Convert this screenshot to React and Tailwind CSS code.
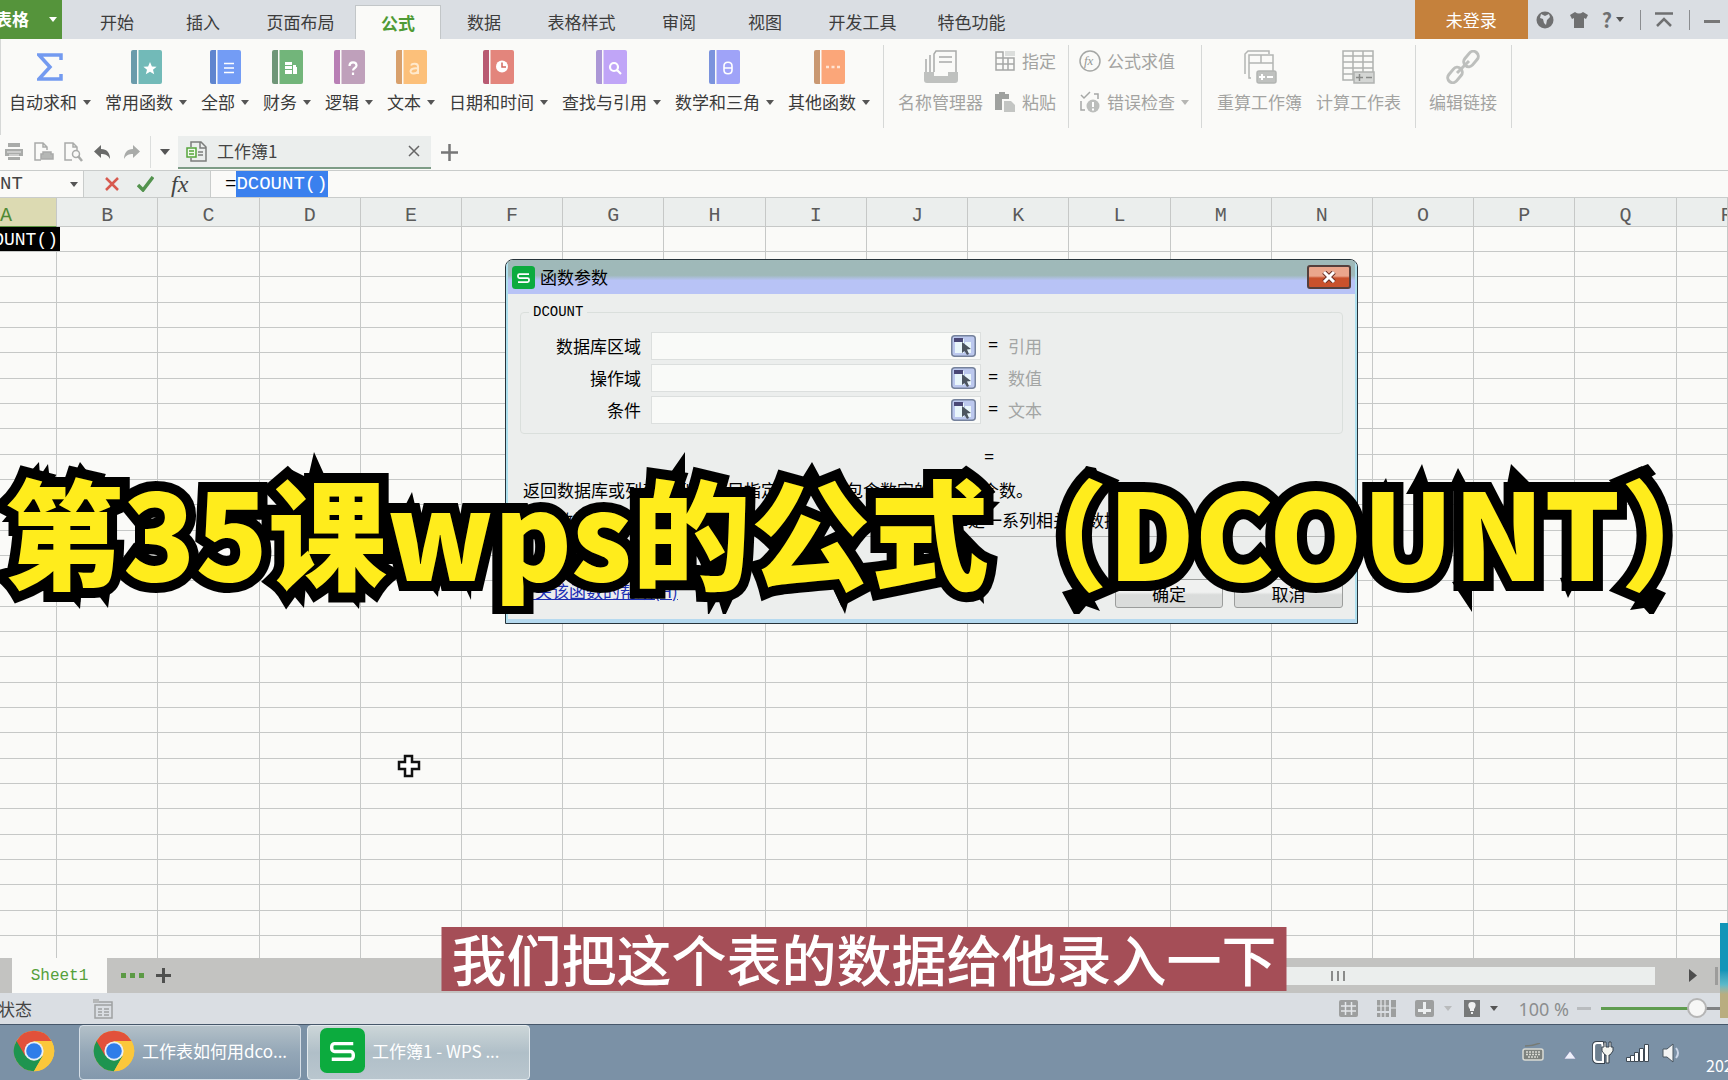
import { useEffect, useRef } from 'react';

const tabs = [
    { name: '开始', wide: false },
    { name: '插入', wide: false },
    { name: '页面布局', wide: true },
    { name: '公式', wide: false, active: true },
    { name: '数据', wide: false },
    { name: '表格样式', wide: true },
    { name: '审阅', wide: false },
    { name: '视图', wide: false },
    { name: '开发工具', wide: true },
    { name: '特色功能', wide: true },
];

const books = [
    { name: '常用函数', spine: '#6a9bab', cover: '#72bab8', mark: 'star' },
    { name: '全部', spine: '#5f85cf', cover: '#739cf5', mark: 'lines' },
    { name: '财务', spine: '#6f9678', cover: '#72b57a', mark: 'money' },
    { name: '逻辑', spine: '#b87fb5', cover: '#bfa0bb', mark: 'question' },
    { name: '文本', spine: '#d8a06c', cover: '#fcc07a', mark: 'letter' },
    { name: '日期和时间', spine: '#b85a72', cover: '#e3857c', mark: 'clock' },
    { name: '查找与引用', spine: '#ab97d6', cover: '#c0a5f7', mark: 'search' },
    { name: '数学和三角', spine: '#7b93dd', cover: '#9fa3f8', mark: 'theta' },
    { name: '其他函数', spine: '#c99872', cover: '#fba679', mark: 'dots' },
];

const columns = 'ABCDEFGHIJKLMNOPQR'.split('');
const rows = Array.from({ length: 29 }, (_, i) => i + 1);

const fields = [
    { id: 'database', label: '数据库区域', type: '引用' },
    { id: 'field', label: '操作域', type: '数值' },
    { id: 'criteria', label: '条件', type: '文本' },
];

const Caret = ({ className = 'text-[#555]' }) => (
    <svg width="8" height="5" viewBox="0 0 8 5" className={className} fill="currentColor">
        <path d="M0 0h8L4 5z" />
    </svg>
);

const marks = {
    star: <path d="M19 12l1.900 4.400 4.700.3-3.600 3 1.200 4.600-4.200-2.500-4.200 2.500 1.200-4.600-3.600-3 4.700-.3z" fill="#fff" />,
    lines: <path d="M14 13.500h10M14 18h10M14 22.500h10" stroke="#fff" strokeWidth="1.600" />,
    money: (
        <g fill="#fff">
            <path d="M13 12h7v3h-7zM13 16h7v3h-7zM13 20h7v4h-7z" />
            <path d="M21 15h3v2h1v7h-4zM22 18l3 2-3 2z" />
        </g>
    ),
    question: <path d="M15.500 16c0-5 7-4.500 7-.5 0 2.500-3.500 2.500-3.500 5M19 22.500v2.500" stroke="#fff" strokeWidth="2.200" fill="none" />,
    letter: <path d="M15 15.500c1-2.500 7-2.500 7 1v7.500M22 18.500c-9-1-9 5-4.500 5 2 0 4-1 4.500-2.500" stroke="#ffe9cc" strokeWidth="2" fill="none" />,
    clock: (
        <g>
            <circle cx="19" cy="16.500" r="6" fill="#fff" />
            <path d="M19 12.500v4.500h4" stroke="#d3685f" strokeWidth="1.500" fill="none" />
        </g>
    ),
    search: <path d="M22 17a4 4 0 1 1-8 0 4 4 0 0 1 8 0zM21 20l4 4" stroke="#fff" strokeWidth="2.200" fill="none" />,
    theta: <path d="M15 16c0-5 8-5 8 0v4c0 5-8 5-8 0zM14.500 18h9" stroke="#fff" strokeWidth="1.600" fill="none" />,
    dots: <path d="M12 17h3M17.500 17h3M23 17h3" stroke="#ffe3d2" strokeWidth="2.600" />,
};

const BookIcon = ({ spine, cover, mark }) => (
    <svg width="31" height="34" viewBox="0 0 31 34">
        <path d="M2 0h4v34H2a2 2 0 0 1-2-2V2a2 2 0 0 1 2-2z" fill={spine} />
        <path d="M7.500 0H29a2 2 0 0 1 2 2v30a2 2 0 0 1-2 2H7.500z" fill={cover} />
        {marks[mark]}
    </svg>
);

const BigButton = ({ icon, label, caret, disabled }) => (
    <button className={`flex flex-col items-center px-[7px] pt-[11px] ${disabled ? 'text-[#a3a3a1]' : 'text-[#3a3a3a]'}`}>
        <span className="flex h-[34px] items-center">{icon}</span>
        <span className="mt-[6px] flex items-center gap-[6px] whitespace-nowrap leading-6">
            {label}
            {caret && <Caret />}
        </span>
    </button>
);

const SmallButton = ({ icon, label, caret }) => (
    <button className="flex h-6 items-center gap-[6px] whitespace-nowrap text-[#a3a3a1]">
        <span className="flex w-[22px] justify-center">{icon}</span>
        {label}
        {caret && <Caret className="text-[#b5b5b3]" />}
    </button>
);

const Separator = () => <div className="mt-[6px] h-[83px] w-px shrink-0 bg-[#d6d8d7]" />;

const ChromeIcon = () => (
    <svg width="44" height="44" viewBox="0 0 48 48" className="shrink-0">
        <circle cx="24" cy="24" r="22" fill="#fbc73b" />
        <path d="M24 24L4.900 13A22 22 0 0 0 24 46l9.500-16.500z" fill="#1e9450" />
        <path d="M4.900 13a22 22 0 0 1 38.200 0H24L14.500 29.500z" fill="#e2513a" />
        <path d="M43.100 13H24l9.500 16.500L24 46a22 22 0 0 0 19.100-33z" fill="#fbc73b" />
        <circle cx="24" cy="24" r="10.500" fill="#e9eef5" />
        <circle cx="24" cy="24" r="8.500" fill="#2f7de9" />
    </svg>
);

const WpsIcon = ({ size }) => (
    <svg width={size} height={size} viewBox="0 0 46 46" className="shrink-0">
        <rect width="46" height="46" rx="7" fill="#0cab3e" />
        <path d="M34 16H15a3 3 0 0 0-3 3v2a3 3 0 0 0 3 3h16a3 3 0 0 1 3 3v2a3 3 0 0 1-3 3H12" fill="none" stroke="#fff" strokeWidth="3.500" />
    </svg>
);

const TitleBar = () => (
    <header className="flex h-[39px] shrink-0 items-stretch bg-[#dadee3] text-[#3c3c3c]">
        <button className="flex w-[62px] items-center justify-end gap-5 overflow-hidden whitespace-nowrap bg-[#55943b] pr-[5px] font-bold text-white">
            <span className="pb-[2px]">表格</span>
            <Caret className="shrink-0 text-white" />
        </button>
        <nav className="ml-3 flex">
            {tabs.map((tab) => (
                <button
                    key={tab.name}
                    className={`mt-[5px] ${tab.wide ? 'w-[109px]' : 'w-[86px]'} ${tab.active ? 'border-x border-t border-[#c2c6c8] bg-[#fafaf8] font-bold text-[#4f9a35]' : ''}`}
                >
                    {tab.name}
                </button>
            ))}
        </nav>
        <div className="ml-auto flex items-center text-[#6f7071]">
            <button className="mr-2 h-full w-[113px] bg-[#c5813c] text-white">未登录</button>
            <button aria-label="网络">
                <svg width="18" height="18" viewBox="0 0 18 18">
                    <circle cx="9" cy="9" r="8.500" fill="currentColor" />
                    <path d="M5 3l4 2 4-2 1 3-3 3-1 5-2-2-1-4-3-1z" fill="#dadee3" />
                </svg>
            </button>
            <button aria-label="皮肤" className="ml-4">
                <svg width="18" height="18" viewBox="0 0 18 18" fill="currentColor">
                    <path d="M5 1q4 3 8 0l5 3-2 4-2-1v10H4V7L2 8 0 4z" />
                </svg>
            </button>
            <button aria-label="帮助" className="ml-[14px] flex items-center gap-1 text-xl font-bold">
                ?<Caret />
            </button>
            <div className="ml-4 h-5 w-px bg-[#8b8d90]" />
            <button aria-label="折叠" className="ml-[14px]">
                <svg width="18" height="16" viewBox="0 0 18 16" fill="none" stroke="currentColor" strokeWidth="2.500">
                    <path d="M0 1.500h18M2 14l7-7 7 7" />
                </svg>
            </button>
            <div className="ml-4 h-5 w-px bg-[#8b8d90]" />
            <button aria-label="最小化" className="ml-[14px] mr-2 mt-1 h-[3px] w-4 bg-[#777]" />
        </div>
    </header>
);

const Ribbon = () => (
    <div className="flex h-[96px] shrink-0 items-start overflow-hidden border-l border-[#d6d8d7] bg-[#fafaf8] pl-px">
        <BigButton
            label="自动求和"
            caret
            icon={
                <svg width="26" height="28" viewBox="0 0 26 28">
                    <path d="M24 7V2H2l11 12L2 26h22v-5" fill="none" stroke="#739af0" strokeWidth="3.500" />
                </svg>
            }
        />
        {books.map((book) => (
            <BigButton key={book.name} label={book.name} caret icon={<BookIcon {...book} />} />
        ))}
        <div className="w-[6px]" />
        <Separator />
        <div className="w-[7px]" />
        <BigButton
            label="名称管理器"
            disabled
            icon={
                <svg width="34" height="34" viewBox="0 0 34 34" fill="none" stroke="#a9aba9" strokeWidth="1.500">
                    <path d="M10 22V4l2-3h20v21M15 7h13M15 12h13M6 5v17M2 9v13" />
                    <path d="M0 22h10v4h14v-4h10v8a3 3 0 0 1-3 3H3a3 3 0 0 1-3-3z" fill="#bfc1bf" stroke="none" />
                </svg>
            }
        />
        <div className="flex flex-col gap-[17px] pl-1 pt-[10px]">
            <SmallButton
                label="指定"
                icon={
                    <svg width="20" height="20" viewBox="0 0 20 20" fill="none" stroke="#a5a7a5" strokeWidth="1.500">
                        <path d="M1 1h7v6h11v12H1zM1 7h18M1 13h18M8 1v18M13 7v12" />
                        <path d="M10 0h10v5H10z" fill="#dcdedc" stroke="none" />
                    </svg>
                }
            />
            <SmallButton
                label="粘贴"
                icon={
                    <svg width="20" height="20" viewBox="0 0 20 20">
                        <path d="M0 2h4V0h6v2h4v5H7v11H0z" fill="#9fa19f" />
                        <path d="M9 9h7l4 4v7H9z" fill="#c3c5c3" />
                    </svg>
                }
            />
        </div>
        <div className="w-3" />
        <Separator />
        <div className="flex flex-col gap-[17px] pl-[10px] pt-[10px]">
            <SmallButton
                label="公式求值"
                icon={
                    <svg width="22" height="22" viewBox="0 0 22 22">
                        <circle cx="11" cy="11" r="10" fill="none" stroke="#a5a7a5" strokeWidth="1.500" />
                        <text x="5" y="15" fontSize="13" fontStyle="italic" fontFamily="Liberation Serif, serif" fill="#969896">fx</text>
                    </svg>
                }
            />
            <SmallButton
                label="错误检查"
                caret
                icon={
                    <svg width="20" height="22" viewBox="0 0 20 22" fill="none" stroke="#a5a7a5" strokeWidth="1.500">
                        <path d="M1 4l3 3 6-6M1 10v9h4M14 3h4v5" />
                        <circle cx="13" cy="15" r="6.500" fill="#bcbebc" stroke="none" />
                        <path d="M13 11v5M13 17.500v2" stroke="#fff" strokeWidth="2" />
                    </svg>
                }
            />
        </div>
        <div className="w-3" />
        <Separator />
        <div className="w-2" />
        <BigButton
            label="重算工作簿"
            disabled
            icon={
                <svg width="34" height="34" viewBox="0 0 34 34" fill="none" stroke="#b3b5b3" strokeWidth="1.500">
                    <path d="M2 24V4l3-3h21v3M8 28H6V5h24v16M6 13h24M18 5v8" />
                    <rect x="14" y="21" width="19" height="12" rx="2" fill="#bfc1bf" />
                    <path d="M16 27h6M19 24v6M24 27h6" stroke="#fff" strokeWidth="2" />
                </svg>
            }
        />
        <BigButton
            label="计算工作表"
            disabled
            icon={
                <svg width="33" height="34" viewBox="0 0 33 34" fill="none" stroke="#b0b2b0" strokeWidth="1.500">
                    <path d="M1 1h30v29H1zM1 6h30M1 12h30M1 18h30M1 24h30M11 1v29M21 1v29" />
                    <rect x="12" y="22" width="20" height="11" fill="#d4d6d4" />
                    <path d="M14 27.500h7M17.500 24v7M24 27.500h6" stroke="#888a88" />
                </svg>
            }
        />
        <div className="w-[7px]" />
        <Separator />
        <div className="w-[6px]" />
        <BigButton
            label="编辑链接"
            disabled
            icon={
                <svg width="34" height="34" viewBox="0 0 34 34" fill="none" stroke="#bdbfbd" strokeWidth="3">
                    <rect x="-5" y="-8.500" width="10" height="17" rx="5" transform="translate(25 9) rotate(40)" />
                    <rect x="-5" y="-8.500" width="10" height="17" rx="5" transform="translate(9 25) rotate(40)" />
                    <path d="M11 23L23 11" />
                </svg>
            }
        />
        <div className="w-[7px]" />
        <Separator />
    </div>
);

const DocumentBar = () => (
    <div className="flex h-[35px] shrink-0 items-center bg-[#fafaf8] pb-px pl-1 text-[#8f918f]">
        <button aria-label="打印">
            <svg width="20" height="18" viewBox="0 0 20 18">
                <path d="M4 0h12v4H4zM1 6h18v7H1zM4 14h12v3H4z" fill="#a9aba9" />
                <path d="M3 9h14M5 12h10" stroke="#eee" />
            </svg>
        </button>
        <button aria-label="直接打印" className="ml-[10px]">
            <svg width="20" height="20" viewBox="0 0 20 20" fill="none" stroke="#a9aba9" strokeWidth="1.500">
                <path d="M7 18H1V1h8l4 4v3M9 1v4h4" />
                <path d="M9 10h8v2h2v5H7v-5h2z" fill="#b5b7b5" />
            </svg>
        </button>
        <button aria-label="打印预览" className="ml-[10px]">
            <svg width="20" height="20" viewBox="0 0 20 20" fill="none" stroke="#a9aba9" strokeWidth="1.500">
                <path d="M8 18H1V1h8l4 4v3M9 1v4h4" />
                <circle cx="12" cy="12" r="3.500" />
                <path d="M14 14l4 5" strokeWidth="2.500" />
            </svg>
        </button>
        <button aria-label="撤销" className="ml-[10px] text-[#6a6b6a]">
            <svg width="17" height="14" viewBox="0 0 17 14" fill="currentColor">
                <path d="M7 0v4c6 0 9 4 9 10-2-4-5-5-9-5v4L0 6.500z" />
            </svg>
        </button>
        <button aria-label="恢复" className="ml-3 text-[#a9aba9]">
            <svg width="17" height="14" viewBox="0 0 17 14" fill="currentColor">
                <path d="M10 0v4C4 4 1 8 1 14c2-4 5-5 9-5v4l7-6.500z" />
            </svg>
        </button>
        <div className="ml-[10px] h-8 w-px bg-[#dcdedd]" />
        <button aria-label="更多" className="ml-[9px]">
            <svg width="10" height="6" viewBox="0 0 10 6"><path d="M0 0h10L5 6z" fill="#555" /></svg>
        </button>
        <div className="ml-2 flex h-[33px] w-[253px] items-center border-b-2 border-[#7d9c86] bg-[#ebeeed] pl-2 text-[#444]">
            <svg width="21" height="21" viewBox="0 0 21 21" fill="none" stroke="#7c7e7c" strokeWidth="1.500">
                <path d="M5 6V1h10l5 5v14H5v-3M14 1v6h6M12 11h5M12 14h5" />
                <path d="M1 7h9v9H1zM3 10h5M3 13h5" stroke="#55a53c" fill="#f2f8ef" />
            </svg>
            <span className="ml-[10px]">工作簿1</span>
            <button aria-label="关闭文档" className="ml-auto mr-[11px]">
                <svg width="12" height="12" viewBox="0 0 12 12"><path d="M1 1l10 10M11 1L1 11" stroke="#666" strokeWidth="1.500" /></svg>
            </button>
        </div>
        <button aria-label="新建" className="ml-[10px]">
            <svg width="17" height="17" viewBox="0 0 17 17"><path d="M0 8.500h17M8.500 0v17" stroke="#777" strokeWidth="2.500" /></svg>
        </button>
    </div>
);

const FormulaBar = () => {
    const inputRef = useRef(null);

    useEffect(() => {
        inputRef.current.focus();
        inputRef.current.setSelectionRange(1, 9);
    }, []);

    return (
        <div className="flex h-7 shrink-0 border-y border-[#c9cccb] bg-[#ebeeed] text-[19px] text-[#444]">
            <div className="flex w-[84px] items-center overflow-hidden border-r border-[#c9cccb] bg-[#fafaf8]">
                <input aria-label="名称框" defaultValue="NT" className="w-[70px] bg-transparent font-['Liberation_Mono',monospace] outline-none" />
                <Caret className="mr-1 shrink-0 text-[#555]" />
            </div>
            <div className="flex w-[127px] items-center gap-[17px] border-r border-[#c9cccb] pl-[21px]">
                <button aria-label="取消输入">
                    <svg width="15" height="14" viewBox="0 0 15 14"><path d="M1 1l12 12M13 1L1 13" stroke="#d75a4f" strokeWidth="2.500" /></svg>
                </button>
                <button aria-label="输入">
                    <svg width="17" height="16" viewBox="0 0 17 16"><path d="M1 9l5 5L16 1" fill="none" stroke="#53934e" strokeWidth="3.500" /></svg>
                </button>
                <button aria-label="插入函数" className="font-['Liberation_Serif',serif] text-2xl italic leading-6">fx</button>
            </div>
            <input
                ref={inputRef}
                aria-label="编辑栏"
                defaultValue="=DCOUNT()"
                className="min-w-0 flex-1 bg-[#fafaf8] pl-[14px] font-['Liberation_Mono',monospace] text-black outline-none selection:bg-[#3a80ee] selection:text-white"
            />
        </div>
    );
};

const Sheet = () => (
    <div className="min-h-0 flex-1 overflow-hidden bg-[#fafaf8] font-['Liberation_Mono',monospace]">
        <table className="w-full table-fixed border-separate border-spacing-0">
            <colgroup>
                <col className="w-[57px]" />
                {columns.slice(1, 17).map((c) => <col key={c} className="w-[101px]" />)}
                <col className="w-[51px]" />
            </colgroup>
            <thead>
                <tr className="h-[29px]">
                    {columns.map((c, i) => (
                        <th
                            key={c}
                            className={`overflow-hidden border-b border-r p-0 align-bottom text-xl font-normal leading-5 ${
                                i === 0
                                    ? 'border-b-[#5a9440] border-r-[#c6c8c7] bg-[#dcdab2] text-left text-[#4f8a35]'
                                    : i === 17
                                      ? 'border-[#c6c8c7] bg-[#ebeeed] pl-[44px] text-left text-[#5b5b5b]'
                                      : 'border-[#c6c8c7] bg-[#ebeeed] text-center text-[#5b5b5b]'
                            }`}
                        >
                            {c}
                        </th>
                    ))}
                </tr>
            </thead>
            <tbody>
                {rows.map((r) => (
                    <tr key={r} className={r % 3 === 0 ? 'h-[26px]' : 'h-[25px]'}>
                        {columns.map((c) => (
                            <td key={c} className="border-b border-r border-[#c6c8c7] p-0">
                                {r === 1 && c === 'A' && (
                                    <div className="relative flex h-6 w-[60px] justify-end overflow-hidden bg-black pr-[2px] text-lg leading-[26px] text-white">
                                        =DCOUNT()
                                    </div>
                                )}
                            </td>
                        ))}
                    </tr>
                ))}
            </tbody>
        </table>
    </div>
);

const SheetBar = () => (
    <div className="flex h-[35px] shrink-0 items-center bg-[#c3c3c1] pl-3">
        <button className="h-full w-[95px] bg-[#fafaf8] font-['Liberation_Mono',monospace] text-base text-[#55a03a]">Sheet1</button>
        <button aria-label="工作表列表" className="ml-[14px] flex gap-1">
            <span className="h-[5px] w-[5px] bg-[#5c9a45]" />
            <span className="h-[5px] w-[5px] bg-[#5c9a45]" />
            <span className="h-[5px] w-[5px] bg-[#5c9a45]" />
        </button>
        <button aria-label="新建工作表" className="ml-3">
            <svg width="15" height="15" viewBox="0 0 15 15"><path d="M0 7.500h15M7.500 0v15" stroke="#4f504f" strokeWidth="3" /></svg>
        </button>
        <div className="ml-[850px] mr-[34px] flex h-[18px] flex-1 items-center justify-center gap-1 bg-[#ebeeed]">
            <span className="h-[10px] w-[2px] bg-[#8a8b8a]" />
            <span className="h-[10px] w-[2px] bg-[#8a8b8a]" />
            <span className="h-[10px] w-[2px] bg-[#8a8b8a]" />
        </div>
        <button aria-label="向右滚动">
            <svg width="8" height="13" viewBox="0 0 8 13"><path d="M0 0l8 6.500L0 13z" fill="#4d4d4d" /></svg>
        </button>
        <div className="ml-[18px] mr-[10px] h-[18px] w-[3px] bg-[#9c9c9b]" />
    </div>
);

const StatusBar = () => (
    <footer className="flex h-[31px] shrink-0 items-center bg-[#dadee3]">
        <div className="flex w-8 justify-end overflow-hidden whitespace-nowrap text-[#444]">状态</div>
        <svg width="20" height="20" viewBox="0 0 20 20" className="ml-[61px]" fill="none" stroke="#9fa1a2" strokeWidth="1.500">
            <path d="M2 6h17v13H2zM2 3h17v3M5 10h4M11 10h5M5 13h4M11 13h5M5 16h4M11 16h5" />
            <path d="M0 0h6v4H0z" fill="#b5b7b8" stroke="none" />
        </svg>
        <div className="ml-auto flex items-center text-[#8c8e8f]">
            <button aria-label="普通视图">
                <svg width="19" height="17" viewBox="0 0 19 17"><rect width="19" height="17" rx="2" fill="#9d9f9f" /><path d="M2 6h15M2 11h15M6.500 2v13M12.500 2v13" stroke="#e4e7ea" strokeWidth="1.500" /></svg>
            </button>
            <button aria-label="分页预览" className="ml-[19px]">
                <svg width="19" height="17" viewBox="0 0 19 17"><path d="M0 0h12v11H0zM14 0h5v17h-5zM0 13h12v4H0z" fill="#9d9f9f" /><path d="M0 6h12M4 0v11M8 0v11M14 8h5M4 13v4M8 13v4" stroke="#e4e7ea" strokeWidth="1.200" /></svg>
            </button>
            <button aria-label="阅读模式" className="ml-[19px] flex items-center gap-[10px]">
                <svg width="19" height="17" viewBox="0 0 19 17"><rect width="19" height="17" rx="2" fill="#9d9f9f" /><path d="M3 10.500h13M9.500 2v12" stroke="#eceff0" strokeWidth="3" /></svg>
                <Caret className="text-[#b9bbbc]" />
            </button>
            <button aria-label="护眼模式" className="ml-3 flex items-center gap-[10px]">
                <svg width="16" height="17" viewBox="0 0 16 17"><rect width="16" height="17" fill="#777979" /><path d="M8 2c5 0 4 5 2 7v2H6V9C4 7 3 2 8 2zM7 12h2v2H7z" fill="#f0f1f1" /></svg>
                <Caret />
            </button>
            <span className="ml-5 font-['Noto_Sans',sans-serif] text-lg leading-6">100 %</span>
            <button aria-label="缩小" className="ml-2 h-[3px] w-[14px] bg-[#b9bcbf]" />
            <input
                type="range"
                aria-label="显示比例"
                defaultValue="80"
                className="ml-[10px] h-5 w-[127px] appearance-none bg-transparent [&::-webkit-slider-runnable-track]:h-[3px] [&::-webkit-slider-runnable-track]:bg-linear-to-r [&::-webkit-slider-runnable-track]:from-[#5f9c50] [&::-webkit-slider-runnable-track]:from-75% [&::-webkit-slider-runnable-track]:to-[#808284] [&::-webkit-slider-runnable-track]:to-75% [&::-webkit-slider-thumb]:-mt-[9px] [&::-webkit-slider-thumb]:h-5 [&::-webkit-slider-thumb]:w-5 [&::-webkit-slider-thumb]:appearance-none [&::-webkit-slider-thumb]:rounded-full [&::-webkit-slider-thumb]:border-2 [&::-webkit-slider-thumb]:border-[#b5b5b5] [&::-webkit-slider-thumb]:bg-[#f7f7f6]"
            />
        </div>
    </footer>
);

const TaskBar = () => (
    <div className="flex h-14 shrink-0 items-stretch border-t border-[#46576a] bg-[#7b91a6] text-[17px] text-white">
        <button aria-label="Chrome" className="ml-3 flex items-center pb-1"><ChromeIcon /></button>
        <button className="ml-[23px] flex w-[222px] items-center gap-[6px] overflow-hidden whitespace-nowrap rounded-sm border border-[#d5dee6] bg-linear-to-b from-[#b3c0c8] via-[#94a7b7] to-[#8398ac] pb-1 pl-3">
            <ChromeIcon />
            工作表如何用dco...
        </button>
        <button className="ml-[6px] flex w-[223px] items-center gap-[7px] overflow-hidden whitespace-nowrap rounded-sm border border-[#e3eaee] bg-linear-to-b from-[#ccd6d8] via-[#b0bfc8] to-[#b9c6ce] pb-1 pl-3">
            <WpsIcon size={45} />
            工作簿1 - WPS ...
        </button>
        <div className="ml-auto flex items-center">
            <svg width="22" height="19" viewBox="0 0 22 19" fill="none" stroke="#d9dad3" strokeWidth="1.500">
                <path d="M3 3c6 0 10-1 15-3" stroke="#777b75" />
                <rect x="1" y="6" width="20" height="11" rx="2" fill="#7d827e" />
                <path d="M4 9h14M4 11.500h14M6 14h10" strokeDasharray="2 1" />
            </svg>
            <button aria-label="显示隐藏的图标" className="ml-5 mt-1">
                <svg width="12" height="8" viewBox="0 0 12 8"><path d="M6 0l6 8H0z" fill="#eef0fa" stroke="#666b9a" strokeWidth=".5" /></svg>
            </button>
            <svg width="22" height="23" viewBox="0 0 22 23" className="ml-4">
                <path d="M10 2H5Q2 2 2 5v12q0 4 4 4h5V6z" fill="#6d7f8f" stroke="#36414c" strokeWidth="4" />
                <path d="M10 2H5Q2 2 2 5v12q0 4 4 4h5V6z" fill="#6d7f8f" stroke="#fff" strokeWidth="2.200" />
                <path d="M12 1h2v5h3V1h2v5h2v4l-3 4h-1v8h-3v-8h-1l-3-4V6h2z" fill="#f4f5f0" stroke="#36414c" strokeWidth="1" />
            </svg>
            <svg width="23" height="18" viewBox="0 0 23 18" className="ml-3" fill="#fff" stroke="#3f4a55" strokeWidth="1">
                <path d="M.5 13.500h4v4h-4zM4.500 11.500h4v6h-4zM8.500 8.500h4v9h-4zM13.500 4.500h4v13h-4zM18.500.5h4v17h-4z" />
            </svg>
            <svg width="20" height="20" viewBox="0 0 20 20" className="ml-[13px]">
                <path d="M1 6h4l6-5v18l-6-5H1z" fill="#f4f5f5" stroke="#4b5661" />
                <path d="M14 5q4 5 0 10" fill="none" stroke="#cbd6e8" strokeWidth="2" />
            </svg>
            <span className="ml-6 mt-6 w-[22px] overflow-hidden text-base">202</span>
        </div>
    </div>
);

const PickerIcon = () => (
    <svg width="25" height="22" viewBox="0 0 25 22">
        <rect x=".75" y=".75" width="23.500" height="20.500" rx="3" fill="#bcc8ee" stroke="#75829c" strokeWidth="1.500" />
        <path d="M4 4h9v14H4zM14 7h6v11h-6z" fill="#e9f6fb" />
        <path d="M3 3h9v4H3z" fill="#4a4876" />
        <path d="M11 7l9 7-4 .5L18 19l-2 1-2.500-4L11 18z" fill="#4c5560" />
    </svg>
);

const FunctionDialog = () => (
    <section
        role="dialog"
        aria-label="函数参数"
        className="absolute left-[505px] top-[259px] w-[853px] overflow-hidden rounded-t-lg border border-[#27333a] bg-[#eceeed] text-black"
    >
        <div className="border-x-2 border-b-4 border-[#aee0ee] border-b-[#b5d9ef]">
            <div className="flex h-[34px] items-center bg-linear-to-b from-[#9fb9b9] from-45% to-[#b8c3f6] to-60% pl-1 pr-1">
                <WpsIcon size={23} />
                <h2 className="ml-[5px] leading-6">函数参数</h2>
                <button aria-label="关闭" className="ml-auto flex h-6 w-11 items-center justify-center rounded-[3px] border-2 border-[#553f3c] bg-linear-to-b from-[#eba68c] from-45% to-[#c9512c] to-55%">
                    <svg width="14" height="12" viewBox="0 0 14 12"><path d="M2 1l10 10M12 1L2 11" stroke="#6a3026" strokeWidth="5" /><path d="M2 1l10 10M12 1L2 11" stroke="#fff" strokeWidth="3" /></svg>
                </button>
            </div>
            <div className="px-3">
                <fieldset className="mt-2 h-[132px] rounded border border-[#dadfdc] pl-[2px]">
                    <legend className="ml-[6px] px-1 font-['Liberation_Mono',monospace] text-sm leading-5">DCOUNT</legend>
                    <div className="flex flex-col gap-1 pt-[10px]">
                        {fields.map((f) => (
                            <div key={f.id} className="flex h-7 items-center">
                                <label htmlFor={f.id} className="w-[118px] text-right">{f.label}</label>
                                <div className="ml-[10px] flex h-7 w-[330px] items-center border border-[#dcdfde] bg-[#f9faf8] pr-1">
                                    <input id={f.id} className="min-w-0 flex-1 bg-transparent px-1 outline-none" />
                                    <button aria-label={`选择${f.label}`}><PickerIcon /></button>
                                </div>
                                <span className="ml-[7px] w-5 font-['Liberation_Mono',monospace]">=</span>
                                <span className="text-[#a3a5a4]">{f.type}</span>
                            </div>
                        ))}
                    </div>
                </fieldset>
                <div className="ml-[464px] mt-3 font-['Liberation_Mono',monospace] leading-6">=</div>
                <p className="mt-2 pl-[3px] leading-6">返回数据库或列表的列中满足指定条件并且包含数字的单元格个数。</p>
                <p className="mt-[6px] flex leading-6">
                    <span className="w-[126px] text-right">数据库区域:</span>
                    <span className="ml-4">构成列表或数据库的单元格区域。数据库是一系列相关的数据</span>
                </p>
            </div>
            <div className="mt-1 flex items-start border-t border-[#b5b7b6] pb-[11px] pl-[10px] pr-3 pt-[42px]">
                <a href="#help" className="leading-6 text-[#1c2fb4] underline">有关该函数的帮助(H)</a>
                <button className="ml-auto h-[29px] w-[108px] rounded-[3px] border border-[#9b9d9c] bg-linear-to-b from-[#f0f1f0] from-45% to-[#dadcdb] to-55%">确定</button>
                <button className="ml-[11px] h-[29px] w-[109px] rounded-[3px] border border-[#9b9d9c] bg-linear-to-b from-[#f0f1f0] from-45% to-[#dadcdb] to-55%">取消</button>
            </div>
        </div>
    </section>
);

const VideoTitle = () => (
    <div className="pointer-events-none absolute left-0 top-[440px] w-full overflow-hidden">
        {/* torn ink around the letters */}
        <svg width="1728" height="190" viewBox="0 0 1728 190" className="absolute left-0 top-0">
            <path
                d="M14 50L39 22l1 14 8-12 3 26zM68 48L80 22l20 26zM280 52l12-22 16 8 6-26 18 40zM400 76l12-24 6 26zM660 48l25-36v38zM796 48l16-26 14 26zM975 60l25 2-22 22zM1082 36l4-10 10 2 4 12-10 14zM1375 56l11-18 6 18zM1406 54l8-14 8-16 10 30zM1448 50l10-22 14 26zM1506 50l5-26 26 26zM1636 46l2-18 10-4 8 10z"
                fill="#000"
            />
            <path
                d="M60 146l20 23 2-23zM90 144l18 24 4-30zM284 144l20 24 2-24zM334 140l25 29 3-29zM418 132l20 25 2-25zM456 128l15 32 1-34zM706 136l2 40 10-18 6 20 16-34zM830 142l15 32 8-32zM962 142l22 22-2-28zM1062 152l14 26 10-12 14 5-14-26zM1452 142l20 30v-34zM1560 138l8 20 12-24zM1646 144l-16 26 14-2 8 9 14-24z"
                fill="#000"
            />
        </svg>
        <h1 className="relative whitespace-nowrap pl-1 pt-[4px] font-['Noto_Sans_CJK_SC',sans-serif] text-[119px] font-black leading-[170px] text-[#ffec1c] [-webkit-text-stroke:20px_#000] [paint-order:stroke_fill] [stroke-linejoin:round]">
            第35课wps的公式（DCOUNT）
        </h1>
    </div>
);

export default function App() {
    return (
        <div lang="zh-CN" className="relative flex h-screen flex-col overflow-hidden bg-[#fafaf8] font-['Noto_Sans_CJK_SC',sans-serif] text-[17px]">
            <TitleBar />
            <Ribbon />
            <DocumentBar />
            <FormulaBar />
            <Sheet />
            <SheetBar />
            <StatusBar />
            <TaskBar />

            <FunctionDialog />

            <svg width="24" height="24" viewBox="0 0 24 24" className="absolute left-[397px] top-[754px]">
                <path d="M8 2h7v6h7v7h-7v7H8v-7H2V8h6z" fill="#fff" stroke="#111" strokeWidth="2.500" />
            </svg>

            <VideoTitle />

            <p className="absolute bottom-[89px] left-1/2 h-16 -translate-x-1/2 whitespace-nowrap bg-[#a54e57] px-[10px] text-[55px] font-medium leading-[60px] text-white">
                我们把这个表的数据给他录入一下
            </p>

            <div className="absolute bottom-[62px] right-0 h-[95px] w-2 bg-linear-to-b from-[#1295b8] from-50% via-[#5bb9c9] via-65% to-[#b9ad80] to-75%" />
        </div>
    );
}
